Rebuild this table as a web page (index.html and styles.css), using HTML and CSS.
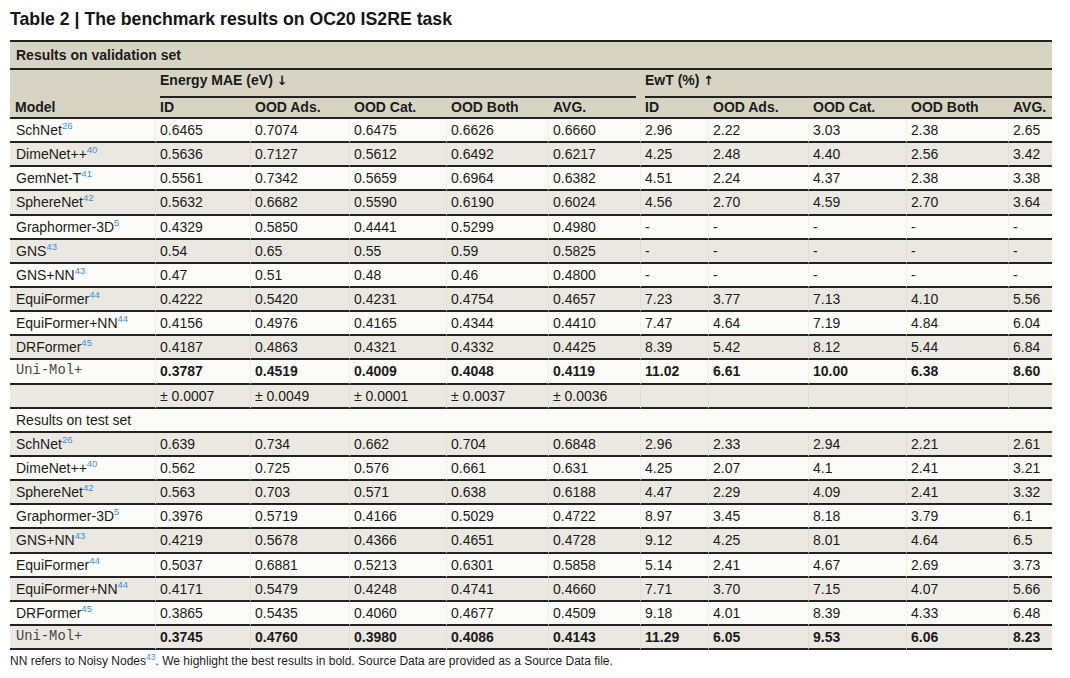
FILE: index.html
```html
<!DOCTYPE html>
<html lang="en">
<head>
<meta charset="utf-8">
<title>Table 2 | The benchmark results on OC20 IS2RE task</title>
<link rel="stylesheet" href="styles.css">
</head>
<body>
<div class="page">
  <h1 class="title">Table 2 | The benchmark results on OC20 IS2RE task</h1>
  <table class="results">
    <colgroup>
      <col class="c-model"><col class="c-id"><col class="c-ads"><col class="c-cat"><col class="c-both"><col class="c-avg">
      <col class="c-eid"><col class="c-eads"><col class="c-ecat"><col class="c-eboth"><col class="c-eavg">
    </colgroup>
    <thead>
      <tr class="section"><th colspan="11">Results on validation set</th></tr>
      <tr class="groups">
        <th rowspan="2" class="model-head">Model</th>
        <th colspan="5" class="group energy"><div class="group-label">Energy MAE (eV) <span class="arrow">↓</span></div></th>
        <th colspan="5" class="group ewt"><div class="group-label">EwT (%) <span class="arrow">↑</span></div></th>
      </tr>
      <tr class="subheads">
        <th>ID</th><th>OOD Ads.</th><th>OOD Cat.</th><th>OOD Both</th><th>AVG.</th>
        <th>ID</th><th>OOD Ads.</th><th>OOD Cat.</th><th>OOD Both</th><th>AVG.</th>
      </tr>
    </thead>
    <tbody>
      <tr><td>SchNet<sup class="ref">26</sup></td><td>0.6465</td><td>0.7074</td><td>0.6475</td><td>0.6626</td><td>0.6660</td><td>2.96</td><td>2.22</td><td>3.03</td><td>2.38</td><td>2.65</td></tr>
      <tr><td>DimeNet++<sup class="ref">40</sup></td><td>0.5636</td><td>0.7127</td><td>0.5612</td><td>0.6492</td><td>0.6217</td><td>4.25</td><td>2.48</td><td>4.40</td><td>2.56</td><td>3.42</td></tr>
      <tr><td>GemNet-T<sup class="ref">41</sup></td><td>0.5561</td><td>0.7342</td><td>0.5659</td><td>0.6964</td><td>0.6382</td><td>4.51</td><td>2.24</td><td>4.37</td><td>2.38</td><td>3.38</td></tr>
      <tr><td>SphereNet<sup class="ref">42</sup></td><td>0.5632</td><td>0.6682</td><td>0.5590</td><td>0.6190</td><td>0.6024</td><td>4.56</td><td>2.70</td><td>4.59</td><td>2.70</td><td>3.64</td></tr>
      <tr><td>Graphormer-3D<sup class="ref">5</sup></td><td>0.4329</td><td>0.5850</td><td>0.4441</td><td>0.5299</td><td>0.4980</td><td>-</td><td>-</td><td>-</td><td>-</td><td>-</td></tr>
      <tr><td>GNS<sup class="ref">43</sup></td><td>0.54</td><td>0.65</td><td>0.55</td><td>0.59</td><td>0.5825</td><td>-</td><td>-</td><td>-</td><td>-</td><td>-</td></tr>
      <tr><td>GNS+NN<sup class="ref">43</sup></td><td>0.47</td><td>0.51</td><td>0.48</td><td>0.46</td><td>0.4800</td><td>-</td><td>-</td><td>-</td><td>-</td><td>-</td></tr>
      <tr><td>EquiFormer<sup class="ref">44</sup></td><td>0.4222</td><td>0.5420</td><td>0.4231</td><td>0.4754</td><td>0.4657</td><td>7.23</td><td>3.77</td><td>7.13</td><td>4.10</td><td>5.56</td></tr>
      <tr><td>EquiFormer+NN<sup class="ref">44</sup></td><td>0.4156</td><td>0.4976</td><td>0.4165</td><td>0.4344</td><td>0.4410</td><td>7.47</td><td>4.64</td><td>7.19</td><td>4.84</td><td>6.04</td></tr>
      <tr><td>DRFormer<sup class="ref">45</sup></td><td>0.4187</td><td>0.4863</td><td>0.4321</td><td>0.4332</td><td>0.4425</td><td>8.39</td><td>5.42</td><td>8.12</td><td>5.44</td><td>6.84</td></tr>
      <tr class="best"><td class="ours">Uni-Mol+</td><td>0.3787</td><td>0.4519</td><td>0.4009</td><td>0.4048</td><td>0.4119</td><td>11.02</td><td>6.61</td><td>10.00</td><td>6.38</td><td>8.60</td></tr>
      <tr><td></td><td>± 0.0007</td><td>± 0.0049</td><td>± 0.0001</td><td>± 0.0037</td><td>± 0.0036</td><td></td><td></td><td></td><td></td><td></td></tr>
      <tr class="subsection"><td colspan="11">Results on test set</td></tr>
      <tr><td>SchNet<sup class="ref">26</sup></td><td>0.639</td><td>0.734</td><td>0.662</td><td>0.704</td><td>0.6848</td><td>2.96</td><td>2.33</td><td>2.94</td><td>2.21</td><td>2.61</td></tr>
      <tr><td>DimeNet++<sup class="ref">40</sup></td><td>0.562</td><td>0.725</td><td>0.576</td><td>0.661</td><td>0.631</td><td>4.25</td><td>2.07</td><td>4.1</td><td>2.41</td><td>3.21</td></tr>
      <tr><td>SphereNet<sup class="ref">42</sup></td><td>0.563</td><td>0.703</td><td>0.571</td><td>0.638</td><td>0.6188</td><td>4.47</td><td>2.29</td><td>4.09</td><td>2.41</td><td>3.32</td></tr>
      <tr><td>Graphormer-3D<sup class="ref">5</sup></td><td>0.3976</td><td>0.5719</td><td>0.4166</td><td>0.5029</td><td>0.4722</td><td>8.97</td><td>3.45</td><td>8.18</td><td>3.79</td><td>6.1</td></tr>
      <tr><td>GNS+NN<sup class="ref">43</sup></td><td>0.4219</td><td>0.5678</td><td>0.4366</td><td>0.4651</td><td>0.4728</td><td>9.12</td><td>4.25</td><td>8.01</td><td>4.64</td><td>6.5</td></tr>
      <tr><td>EquiFormer<sup class="ref">44</sup></td><td>0.5037</td><td>0.6881</td><td>0.5213</td><td>0.6301</td><td>0.5858</td><td>5.14</td><td>2.41</td><td>4.67</td><td>2.69</td><td>3.73</td></tr>
      <tr><td>EquiFormer+NN<sup class="ref">44</sup></td><td>0.4171</td><td>0.5479</td><td>0.4248</td><td>0.4741</td><td>0.4660</td><td>7.71</td><td>3.70</td><td>7.15</td><td>4.07</td><td>5.66</td></tr>
      <tr><td>DRFormer<sup class="ref">45</sup></td><td>0.3865</td><td>0.5435</td><td>0.4060</td><td>0.4677</td><td>0.4509</td><td>9.18</td><td>4.01</td><td>8.39</td><td>4.33</td><td>6.48</td></tr>
      <tr class="best"><td class="ours">Uni-Mol+</td><td>0.3745</td><td>0.4760</td><td>0.3980</td><td>0.4086</td><td>0.4143</td><td>11.29</td><td>6.05</td><td>9.53</td><td>6.06</td><td>8.23</td></tr>
    </tbody>
  </table>
  <p class="note">NN refers to Noisy Nodes<sup class="ref-note">43</sup>. We highlight the best results in bold. Source Data are provided as a Source Data file.</p>
</div>
</body>
</html>
```
FILE: styles.css
```css
html, body {
  margin: 0;
  padding: 0;
  background: #ffffff;
}

body {
  font-family: "Liberation Sans", Arial, sans-serif;
  color: #1b1b1b;
}

.page {
  padding: 8px 0 0 10px;
}

.title {
  margin: 0 0 10px;
  font-size: 17.7px;
  line-height: 22px;
  font-weight: 700;
  color: #151515;
}

.results {
  width: 1042px;
  table-layout: fixed;
  border-collapse: separate;
  border-spacing: 0;
  font-size: 14px;
}

.c-model { width: 145px; }
.c-id { width: 95px; }
.c-ads { width: 99px; }
.c-cat { width: 97px; }
.c-both { width: 102px; }
.c-avg { width: 92px; }
.c-eid { width: 68px; }
.c-eads { width: 100px; }
.c-ecat { width: 98px; }
.c-eboth { width: 102px; }
.c-eavg { width: 44px; }

.results th,
.results td {
  box-sizing: border-box;
  padding: 0 0 0 5px;
  text-align: left;
  white-space: nowrap;
  overflow: visible;
}

.results th {
  background: #d7d4c3;
  font-weight: 700;
}

.section th {
  height: 30px;
  border-top: 2px solid #222;
  border-bottom: 2px solid #222;
  padding-left: 6px;
  line-height: 18px;
  vertical-align: middle;
}

.groups th {
  height: 28px;
  vertical-align: bottom;
}

.group.energy {
  padding-right: 4px;
}

.group-label {
  line-height: 18px;
  padding-bottom: 6px;
  border-bottom: 2px solid #222;
}

.arrow {
  font-family: "DejaVu Sans", sans-serif;
  font-size: 13px;
  font-weight: 700;
}

.model-head {
  padding-left: 6px;
  vertical-align: bottom;
  line-height: 19px;
  border-bottom: 2px solid #222;
}

.subheads th {
  height: 21px;
  line-height: 19px;
  vertical-align: bottom;
  border-bottom: 2px solid #222;
}

.results td {
  height: 24.15px;
  line-height: 16px;
  vertical-align: middle;
  border-bottom: 2px solid #222;
  background: #fbfbf8;
}

.results td + td {
  border-left: 1px solid rgba(0, 0, 0, 0.045);
  padding-left: 4px;
}

.results tbody tr:nth-child(even) td {
  background: #eae8e1;
}

.results td:first-child {
  padding-left: 6px;
}

.subsection td {
  font-weight: 400;
}

.best td {
  font-weight: 700;
}

.best td.ours {
  font-family: "Liberation Mono", "Courier New", monospace;
  font-weight: 400;
  font-size: 13.8px;
  color: #474747;
}

.ref {
  font-size: 9.5px;
  line-height: 0;
  vertical-align: 6px;
  color: #3c8fd4;
}

.note {
  margin: 3px 0 0;
  font-size: 12px;
  line-height: 16px;
  color: #1b1b1b;
}

.ref-note {
  font-size: 8.5px;
  line-height: 0;
  vertical-align: 5px;
  color: #3c8fd4;
}
```
